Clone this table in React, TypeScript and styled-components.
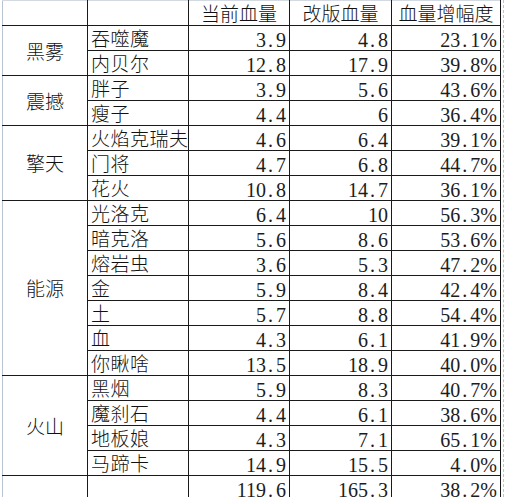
import styled, { createGlobalStyle } from "styled-components";

const GlobalStyle = createGlobalStyle`
  html, body {
    margin: 0;
    padding: 0;
    background: #ffffff;
  }
`;

const CJK = `"Noto Sans CJK SC", "Noto Sans", sans-serif`;
const NUM = `"Liberation Serif", "Noto Sans CJK SC", serif`;
const LINE = "#1a1a1a";
const FRAME = "#b9c4d3";

interface Row {
  name: string;
  cur: string;
  next: string | number;
  rise: string;
}

interface Group {
  label: string;
  rows: Row[];
}

const GROUPS: Group[] = [
  {
    label: "黑雾",
    rows: [
      { name: "吞噬魔", cur: "3.9", next: "4.8", rise: "23.1%" },
      { name: "内贝尔", cur: "12.8", next: "17.9", rise: "39.8%" },
    ],
  },
  {
    label: "震撼",
    rows: [
      { name: "胖子", cur: "3.9", next: "5.6", rise: "43.6%" },
      { name: "瘦子", cur: "4.4", next: "6", rise: "36.4%" },
    ],
  },
  {
    label: "擎天",
    rows: [
      { name: "火焰克瑞夫", cur: "4.6", next: "6.4", rise: "39.1%" },
      { name: "门将", cur: "4.7", next: "6.8", rise: "44.7%" },
      { name: "花火", cur: "10.8", next: "14.7", rise: "36.1%" },
    ],
  },
  {
    label: "能源",
    rows: [
      { name: "光洛克", cur: "6.4", next: "10", rise: "56.3%" },
      { name: "暗克洛", cur: "5.6", next: "8.6", rise: "53.6%" },
      { name: "熔岩虫", cur: "3.6", next: "5.3", rise: "47.2%" },
      { name: "金", cur: "5.9", next: "8.4", rise: "42.4%" },
      { name: "土", cur: "5.7", next: "8.8", rise: "54.4%" },
      { name: "血", cur: "4.3", next: "6.1", rise: "41.9%" },
      { name: "你瞅啥", cur: "13.5", next: "18.9", rise: "40.0%" },
    ],
  },
  {
    label: "火山",
    rows: [
      { name: "黑烟", cur: "5.9", next: "8.3", rise: "40.7%" },
      { name: "魔刹石", cur: "4.4", next: "6.1", rise: "38.6%" },
      { name: "地板娘", cur: "4.3", next: "7.1", rise: "65.1%" },
      { name: "马蹄卡", cur: "14.9", next: "15.5", rise: "4.0%" },
    ],
  },
];

const Page = styled.div`
  display: flex;
  align-items: flex-start;
  padding-left: 2px;
`;

const Sheet = styled.table`
  border-collapse: collapse;
  table-layout: fixed;
  width: 499px;
`;

const Gutter = styled.div`
  width: 2px;
  height: 497px;
  border-right: 1px dashed #c4c4c4;
`;

const Cell = styled.td`
  height: 24px;
  padding: 0;
  border: 1px solid ${LINE};
  white-space: nowrap;
  overflow: visible;
  color: #111;
`;

const cjkText = `
  font-family: ${CJK};
  font-size: 19px;
  font-weight: 300;
  line-height: 24px;
`;

const HeadCell = styled(Cell)<{ $first?: boolean }>`
  ${cjkText}
  text-align: center;
  vertical-align: middle;
  border-top-color: #d3d9e1;
  ${({ $first }) => ($first ? `border-left-color: ${FRAME};` : "")}
`;

const GroupCell = styled(Cell)`
  ${cjkText}
  text-align: center;
  vertical-align: middle;
  border-left-color: ${FRAME};
`;

const NameCell = styled(Cell)`
  ${cjkText}
  text-align: left;
  vertical-align: middle;
  padding-left: 3px;
  letter-spacing: 0.5px;
`;

const NumCell = styled(Cell)`
  font-family: ${NUM};
  font-size: 20px;
  line-height: 20px;
  text-align: right;
  vertical-align: bottom;
  padding-right: 3px;
  color: #1c1c1c;
`;

const Dot = styled.span`
  margin: 0 3px 0 2px;
`;

function Num({ value }: { value: string | number }) {
  const [a, b] = String(value).split(".");
  if (b === undefined) return <>{a}</>;
  return (
    <>
      {a}
      <Dot>.</Dot>
      {b}
    </>
  );
}

export default function App() {
  return (
    <Page>
      <GlobalStyle />
      <Sheet>
        <colgroup>
          <col style={{ width: 85 }} />
          <col style={{ width: 101 }} />
          <col style={{ width: 101 }} />
          <col style={{ width: 102 }} />
          <col style={{ width: 109 }} />
        </colgroup>
        <tbody>
          <tr>
            <HeadCell $first />
            <HeadCell />
            <HeadCell>当前血量</HeadCell>
            <HeadCell>改版血量</HeadCell>
            <HeadCell>血量增幅度</HeadCell>
          </tr>
          {GROUPS.map((g) =>
            g.rows.map((r, i) => (
              <tr key={g.label + r.name}>
                {i === 0 && <GroupCell rowSpan={g.rows.length}>{g.label}</GroupCell>}
                <NameCell>{r.name}</NameCell>
                <NumCell>
                  <Num value={r.cur} />
                </NumCell>
                <NumCell>
                  <Num value={r.next} />
                </NumCell>
                <NumCell>
                  <Num value={r.rise} />
                </NumCell>
              </tr>
            ))
          )}
          <tr>
            <GroupCell />
            <NameCell />
            <NumCell>
              <Num value="119.6" />
            </NumCell>
            <NumCell>
              <Num value="165.3" />
            </NumCell>
            <NumCell>
              <Num value="38.2%" />
            </NumCell>
          </tr>
        </tbody>
      </Sheet>
      <Gutter />
    </Page>
  );
}
